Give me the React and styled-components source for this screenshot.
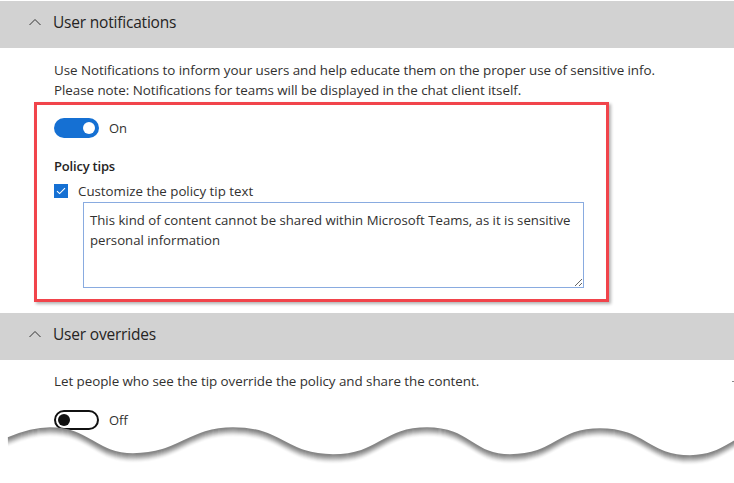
import styled, { createGlobalStyle } from "styled-components";

const GlobalStyle = createGlobalStyle`
  body {
    margin: 0;
    background: #fff;
    font-family: "Open Sans", "Noto Sans", Arial, sans-serif;
    color: #323130;
  }
`;

const Page = styled.div`
  position: relative;
  width: 734px;
  height: 483px;
  overflow: hidden;
  padding-top: 1px;
  box-sizing: border-box;
`;

const Header = styled.div`
  display: flex;
  align-items: center;
  height: 47px;
  box-sizing: border-box;
  padding: 0 0 5px 29px;
  background: #d2d2d2;
`;

const Title = styled.span`
  margin-left: 12px;
  font-size: 15.5px;
  color: #252423;
  letter-spacing: -0.2px;
`;

const Body = styled.div`
  padding: ${(p) => p.$top}px 0 ${(p) => p.$bottom}px 54px;
`;

const Desc = styled.div`
  font-size: 13.4px;
  line-height: 20px;
  color: #323130;
  letter-spacing: -0.05px;
`;

const Highlight = styled.div`
  width: 575px;
  box-sizing: border-box;
  margin: 2px 0 0 -20px;
  padding: 13px 0 11px 17px;
  border: 3px solid #f1444b;
  box-shadow: 2px 2px 3px rgba(0, 0, 0, 0.3);
`;

const ToggleRow = styled.div`
  display: flex;
  align-items: center;
  gap: 10px;
  height: 20px;
  margin-top: ${(p) => p.$top || 0}px;
`;

const Switch = styled.span`
  position: relative;
  display: inline-block;
  width: 45px;
  height: 20px;
  box-sizing: border-box;
  border-radius: 10px;
  background: ${(p) => (p.$on ? "#1570d3" : "#fff")};
  border: ${(p) => (p.$on ? "none" : "2px solid #111")};
`;

const Knob = styled.span`
  position: absolute;
  top: 50%;
  width: 12px;
  height: 12px;
  margin-top: -6px;
  border-radius: 50%;
  background: ${(p) => (p.$on ? "#fff" : "#111")};
  ${(p) => (p.$on ? "right: 4px;" : "left: 2px;")}
`;

const ToggleText = styled.span`
  font-size: 13px;
  color: #323130;
`;

const SubHead = styled.div`
  margin-top: 18px;
  font-size: 13px;
  font-weight: 600;
  line-height: 20px;
  letter-spacing: -0.2px;
  color: #252423;
`;

const CheckRow = styled.label`
  display: flex;
  align-items: center;
  gap: 10px;
  height: 20px;
  margin-top: 5px;
  font-size: 13.3px;
  color: #323130;
`;

const Box = styled.span`
  display: flex;
  align-items: center;
  justify-content: center;
  width: 14px;
  height: 14px;
  background: #1570d3;
`;

const TipText = styled.textarea`
  display: block;
  width: 501px;
  height: 86px;
  box-sizing: border-box;
  margin: 1px 0 0 29px;
  padding: 7px 6px;
  border: 1px solid #89abe0;
  border-radius: 0;
  font-family: "Open Sans", "Noto Sans", Arial, sans-serif;
  font-size: 13.2px;
  line-height: 20px;
  color: #323130;
  outline: none;
  resize: both;
`;

const Tear = styled.svg`
  position: absolute;
  left: 0;
  top: 418px;
  width: 734px;
  height: 65px;
`;

const Dot = styled.span`
  position: absolute;
  right: 0;
  top: 381px;
  width: 2px;
  height: 1px;
  background: #888;
`;

const Chevron = () => (
  <svg width="12" height="8" viewBox="0 0 12 8">
    <path d="M0.5 7 L6 1.5 L11.5 7" fill="none" stroke="#333" strokeWidth="1" />
  </svg>
);

const Toggle = ({ on, top }) => (
  <ToggleRow $top={top}>
    <Switch $on={on}>
      <Knob $on={on} />
    </Switch>
    <ToggleText>{on ? "On" : "Off"}</ToggleText>
  </ToggleRow>
);

const wave =
  "M8 20 C22 14 35 10 50 10 C90 10 95 36 133 36 C180 36 188 10 233 10 C283 10 285 37 333 37 C380 37 382 10 427 10 C470 10 472 37 510 37 C556 37 556 11 600 11 C645 11 648 38 690 38 C712 38 722 30 740 20";

const shades = ["#fbfbfb", "#f2f2f2", "#e6e6e6", "#d6d6d6", "#c4c4c4", "#b2b2b2", "#a2a2a2", "#939393", "#878787"];

export default function App() {
  return (
    <Page>
      <GlobalStyle />
      <Header>
        <Chevron />
        <Title>User notifications</Title>
      </Header>
      <Body $top={12} $bottom={11}>
        <Desc>
          Use Notifications to inform your users and help educate them on the proper use of sensitive info.
          <br />
          Please note: Notifications for teams will be displayed in the chat client itself.
        </Desc>
        <Highlight>
          <Toggle on />
          <SubHead>Policy tips</SubHead>
          <CheckRow>
            <Box>
              <svg width="10" height="8" viewBox="0 0 10 8">
                <path d="M1 4.2 L3.6 6.6 L9 1.2" fill="none" stroke="#fff" strokeWidth="1.1" />
              </svg>
            </Box>
            Customize the policy tip text
          </CheckRow>
          <TipText
            readOnly
            defaultValue="This kind of content cannot be shared within Microsoft Teams, as it is sensitive personal information"
          />
        </Highlight>
      </Body>
      <Header>
        <Chevron />
        <Title>User overrides</Title>
      </Header>
      <Body $top={11} $bottom={0}>
        <Desc>Let people who see the tip override the policy and share the content.</Desc>
        <Toggle top={19} />
      </Body>
      <Dot />
      <Tear viewBox="0 0 734 65">
        <path d={`${wave} L740 65 L0 65 Z`} fill="#fff" transform="translate(0 9)" />
        {shades.map((c, i) => (
          <path
            key={i}
            d={wave}
            fill="none"
            stroke={c}
            strokeWidth="1.6"
            transform={`translate(0 ${shades.length - 1 - i})`}
          />
        ))}
      </Tear>
    </Page>
  );
}
